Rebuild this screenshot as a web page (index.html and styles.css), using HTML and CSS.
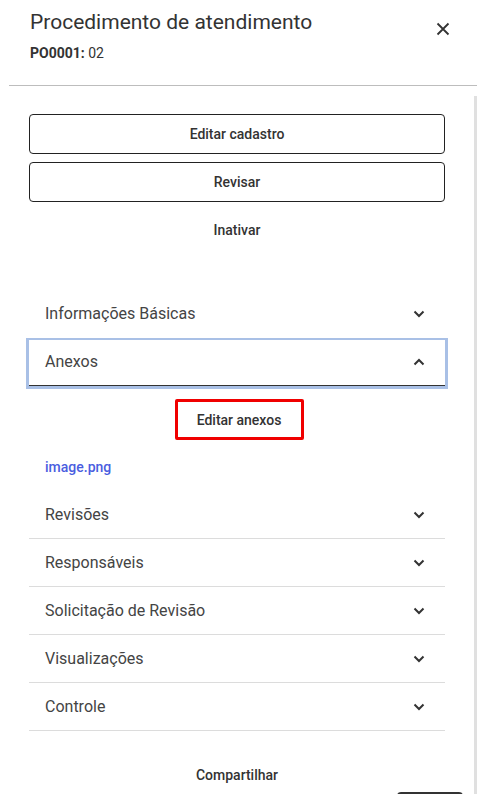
FILE: index.html
```html
<!DOCTYPE html>
<html lang="pt-BR">
<head>
<meta charset="utf-8">
<title>Procedimento de atendimento</title>
<link rel="stylesheet" href="styles.css">
</head>
<body>
<div class="dialog">
  <header class="head">
    <div class="head-text">
      <h1 class="title">Procedimento de atendimento</h1>
      <div class="code"><b>PO0001:</b> 02</div>
    </div>
    <button class="close" aria-label="Fechar">
      <svg width="14" height="14" viewBox="0 0 14 14"><path d="M1.5 1.5 L12.5 12.5 M12.5 1.5 L1.5 12.5" stroke="#333" stroke-width="1.8" fill="none"/></svg>
    </button>
  </header>
  <div class="divider"></div>
  <div class="body">
    <div class="content">
      <div class="actions">
        <button class="btn outlined">Editar cadastro</button>
        <button class="btn outlined">Revisar</button>
        <button class="btn text">Inativar</button>
      </div>
      <div class="accordion">
        <div class="acc-head plain">
          <span>Informações Básicas</span>
          <svg class="chev" width="12" height="8" viewBox="0 0 12 8"><path d="M1.5 1.5 L6 6 L10.5 1.5" stroke="#333" stroke-width="2" fill="none"/></svg>
        </div>
        <div class="acc-head focused">
          <span>Anexos</span>
          <svg class="chev" width="12" height="8" viewBox="0 0 12 8"><path d="M1.5 6.5 L6 2 L10.5 6.5" stroke="#333" stroke-width="2" fill="none"/></svg>
        </div>
        <div class="acc-body">
          <div class="center-row"><button class="btn text highlight">Editar anexos</button></div>
          <a class="file" href="#">image.png</a>
        </div>
        <div class="acc-head">
          <span>Revisões</span>
          <svg class="chev" width="12" height="8" viewBox="0 0 12 8"><path d="M1.5 1.5 L6 6 L10.5 1.5" stroke="#333" stroke-width="2" fill="none"/></svg>
        </div>
        <div class="acc-head">
          <span>Responsáveis</span>
          <svg class="chev" width="12" height="8" viewBox="0 0 12 8"><path d="M1.5 1.5 L6 6 L10.5 1.5" stroke="#333" stroke-width="2" fill="none"/></svg>
        </div>
        <div class="acc-head">
          <span>Solicitação de Revisão</span>
          <svg class="chev" width="12" height="8" viewBox="0 0 12 8"><path d="M1.5 1.5 L6 6 L10.5 1.5" stroke="#333" stroke-width="2" fill="none"/></svg>
        </div>
        <div class="acc-head">
          <span>Visualizações</span>
          <svg class="chev" width="12" height="8" viewBox="0 0 12 8"><path d="M1.5 1.5 L6 6 L10.5 1.5" stroke="#333" stroke-width="2" fill="none"/></svg>
        </div>
        <div class="acc-head">
          <span>Controle</span>
          <svg class="chev" width="12" height="8" viewBox="0 0 12 8"><path d="M1.5 1.5 L6 6 L10.5 1.5" stroke="#333" stroke-width="2" fill="none"/></svg>
        </div>
      </div>
      <div class="share-row"><button class="btn text">Compartilhar</button></div>
      <div class="footer-row"><span class="footer-btn"></span></div>
    </div>
    <div class="scrollbar"></div>
  </div>
</div>
</body>
</html>
```
FILE: styles.css
```css
* { box-sizing: border-box; }
html, body { margin: 0; padding: 0; background: #fff; }
body {
  font-family: Roboto, "Liberation Sans", Arial, sans-serif;
  color: #333;
  width: 477px;
  height: 794px;
  overflow: hidden;
}
.dialog { display: flex; flex-direction: column; height: 794px; }
.head {
  display: flex;
  justify-content: space-between;
  align-items: flex-start;
  padding: 8px 30px 0 30px;
  height: 85px;
}
.title {
  margin: 0;
  font-size: 21px;
  font-weight: 400;
  line-height: 28px;
  color: #333;
  letter-spacing: 0;
}
.code {
  margin-top: 7px;
  font-size: 14px;
  line-height: 20px;
  color: #333;
}
.code b { font-weight: 700; }
.close {
  margin-top: 14px;
  margin-right: -3px;
  padding: 0;
  border: 0;
  background: none;
  width: 14px;
  height: 14px;
  display: flex;
}
.divider { height: 1px; background: #bdbdbd; margin-left: 9px; }
.body { flex: 1; display: flex; min-height: 0; }
.content { flex: 1; padding: 28px 29px 0 29px; display: flex; flex-direction: column; }
.scrollbar { width: 3px; background: #e0e0e0; margin-top: 10px; }
.actions { display: flex; flex-direction: column; gap: 8px; }
.btn {
  font-family: inherit;
  font-size: 14px;
  font-weight: 500;
  color: #333;
  background: #fff;
  height: 40px;
  border-radius: 4px;
  cursor: pointer;
}
.btn.outlined { border: 1px solid #222; width: 100%; }
.btn.text { border: 0; background: none; }
.accordion { margin-top: 40px; display: flex; flex-direction: column; }
.acc-head {
  height: 48px;
  display: flex;
  align-items: center;
  justify-content: space-between;
  padding: 0 20px 0 16px;
  font-size: 16px;
  color: #444;
  border-bottom: 1px solid #dcdcdc;
  position: relative;
}
.acc-head.plain { border-bottom-color: transparent; }
.acc-head.focused { border-bottom-color: #333; }
.acc-head.focused::after {
  content: "";
  position: absolute;
  left: -3px;
  right: -3px;
  top: 0;
  bottom: -4px;
  border: 3px solid #a9c0e6;
  border-top-width: 2px;
  pointer-events: none;
}
.chev { display: block; }
.acc-body { padding: 13px 16px 0 16px; display: flex; flex-direction: column; }
.center-row { display: flex; justify-content: center; padding-left: 4px; }
.btn.highlight {
  border: 3px solid #f00000;
  border-radius: 2px;
  width: 129px;
  height: 41px;
  padding: 0;
}
.file {
  margin-top: 17px;
  font-size: 14px;
  font-weight: 500;
  color: #4a5de0;
  text-decoration: none;
  line-height: 20px;
  height: 34px;
}
.share-row { display: flex; justify-content: center; margin-top: 24px; }
.footer-row { display: flex; justify-content: flex-end; margin-top: -3px; margin-right: -18px; }
.footer-btn { width: 66px; height: 6px; border-top: 2px solid #333; border-radius: 4px 4px 0 0; flex-shrink: 0; }
```
